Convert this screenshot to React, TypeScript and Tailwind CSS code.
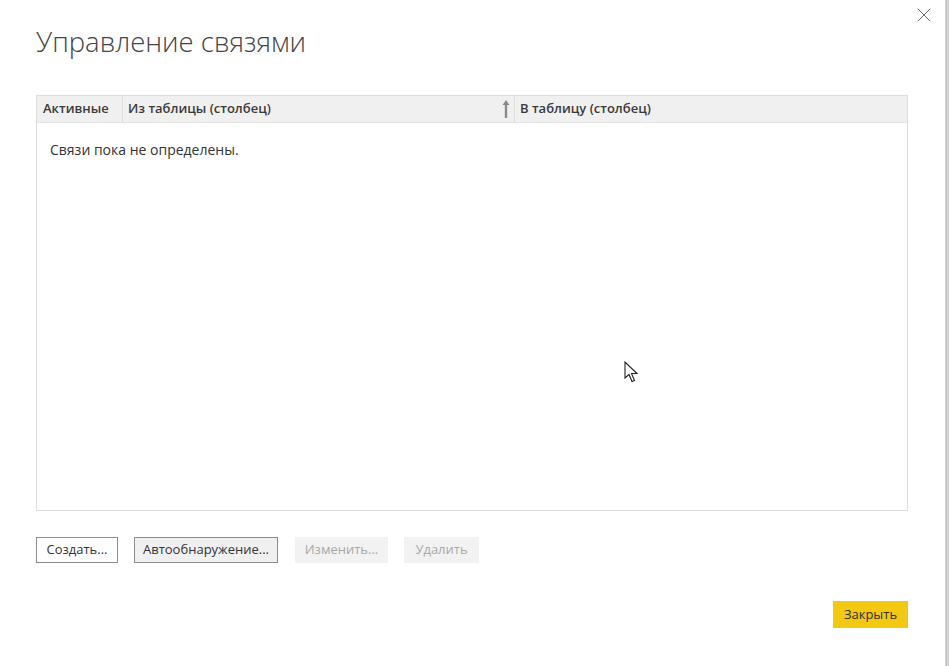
import { X } from 'lucide-react'

const font = { fontFamily: '"Open Sans", "Noto Sans", sans-serif' }

function Cursor() {
  return (
    <svg width="17" height="24" viewBox="0 0 17 24" className="absolute left-[624px] top-[361px]">
      <path d="M1 1 L1 17 L5 13.5 L8 20.5 L10.5 19.5 L7.5 12.5 L13 12.5 Z" fill="#fff" stroke="#222" strokeWidth="1.1" strokeLinejoin="miter" />
    </svg>
  )
}

export default function App() {
  return (
    <div className="flex h-[666px] w-[949px] bg-white text-[#333]" style={font}>
      <div className="relative flex flex-1 flex-col">
        <button className="absolute right-[9px] top-[3px] text-[#6f6f6f]" aria-label="Закрыть">
          <X size={24} strokeWidth={1} />
        </button>

        <h1 className="ml-[36px] mt-[23px] text-[27.5px] font-light leading-[38px] text-[#444]">
          Управление связями
        </h1>

        {/* Таблица связей */}
        <div className="ml-[36px] mt-[34px] flex h-[416px] w-[872px] flex-col border border-[#dcdcdc]">
          <div className="flex h-[27px] shrink-0 items-center border-b border-[#e2e2e2] bg-[#f0f0f0] text-[13px] font-semibold text-[#3a3a3a]">
            <div className="flex h-full w-[86px] items-center border-r border-[#dcdcdc] pl-[6px]">Активные</div>
            <div className="flex h-full w-[392px] items-center justify-between border-r border-[#dcdcdc] pl-[5px] pr-[3px]">
              <span>Из таблицы (столбец)</span>
              <svg width="10" height="20" viewBox="0 0 10 20">
                <path d="M5 1 L1.5 6 L3.8 6 L3.8 19 L6.2 19 L6.2 6 L8.5 6 Z" fill="#8a8a8a" />
              </svg>
            </div>
            <div className="flex h-full flex-1 items-center pl-[5px]">В таблицу (столбец)</div>
          </div>
          <div className="flex-1 px-[13px] pt-[16px] text-[14px] text-[#333]">Связи пока не определены.</div>
        </div>

        <div className="ml-[36px] mt-[26px] flex items-center text-[13px]">
          <button className="h-[26px] w-[82px] border border-[#8c8c8c] bg-white text-[#333]">Создать...</button>
          <button className="ml-[16px] h-[26px] w-[144px] border border-[#8c8c8c] bg-[#f0f0f0] text-[#333]">
            Автообнаружение...
          </button>
          <button className="ml-[17px] h-[26px] w-[93px] bg-[#f2f2f2] text-[#a8a8a8]" disabled>
            Изменить...
          </button>
          <button className="ml-[16px] h-[26px] w-[75px] bg-[#f2f2f2] text-[#a8a8a8]" disabled>
            Удалить
          </button>
        </div>

        <div className="mr-[37px] mt-[38px] flex justify-end">
          <button className="h-[27px] w-[75px] bg-[#f2c811] text-[13px] text-[#333]">Закрыть</button>
        </div>

        <Cursor />
      </div>

      {/* Край окна позади диалога */}
      <div className="flex w-[4px] flex-col bg-[#d6d6d6]">
        <div className="h-full w-[2px] border-r border-[#bdbdbd]" />
      </div>
    </div>
  )
}
